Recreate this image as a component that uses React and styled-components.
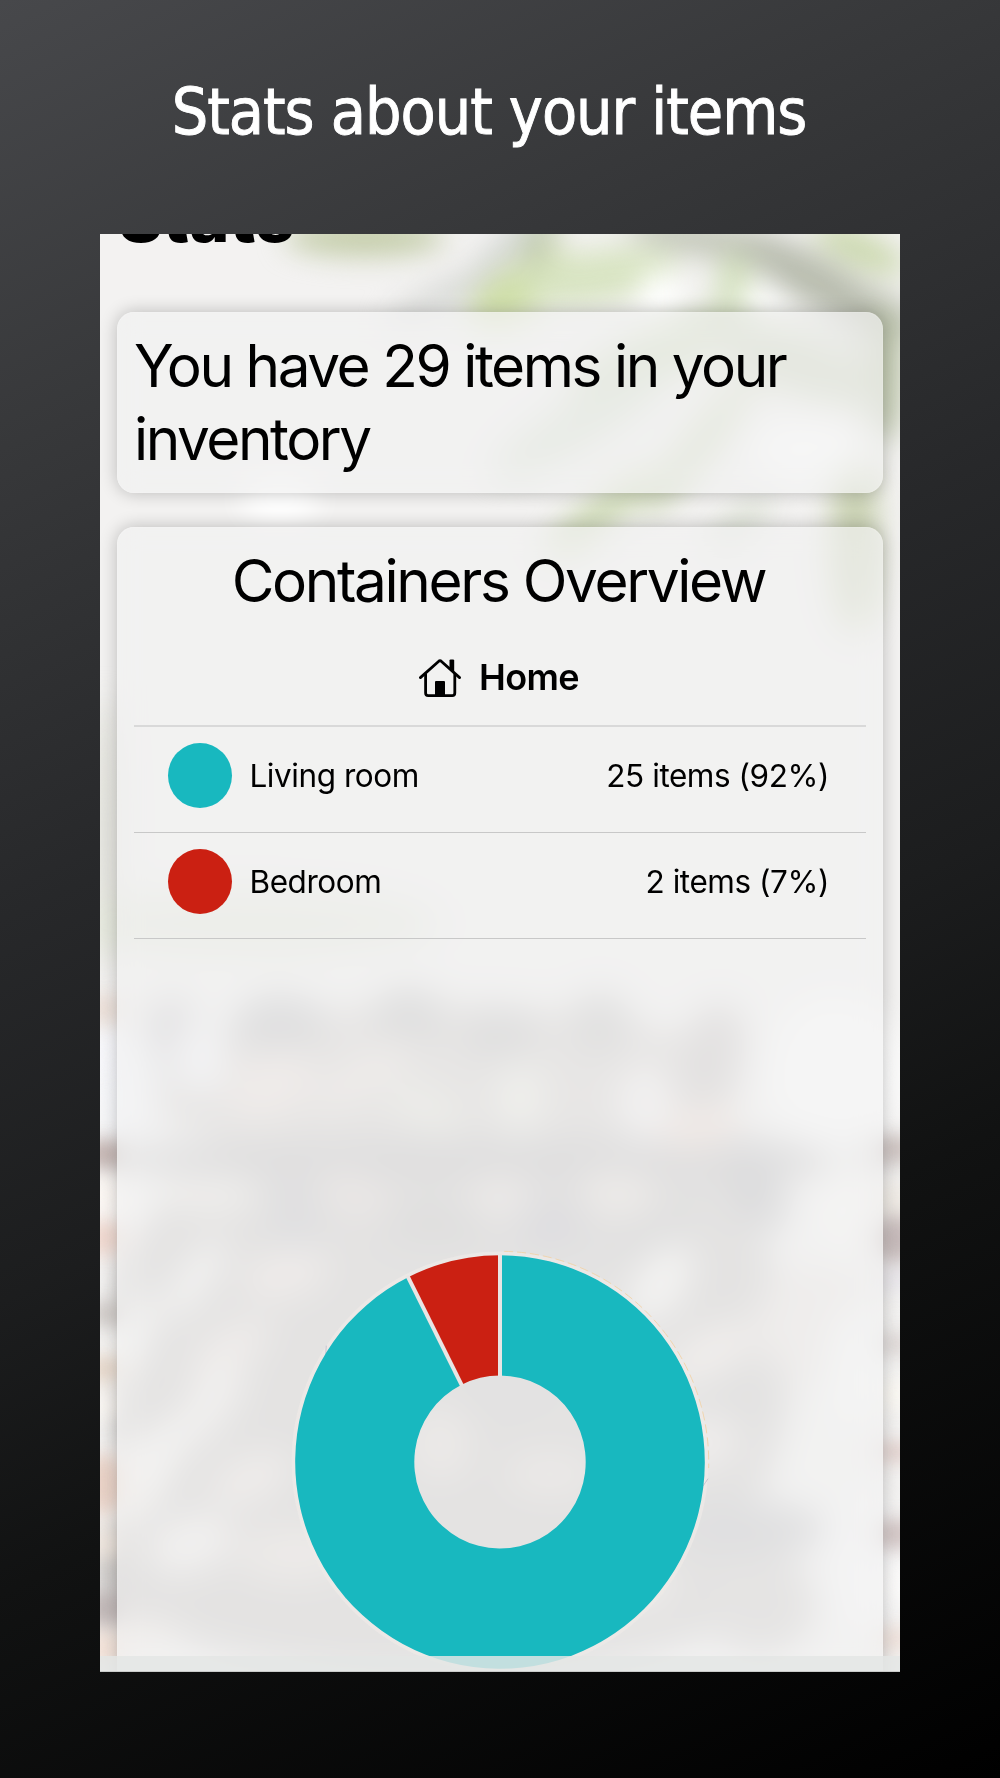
import React from 'react'
import styled, { createGlobalStyle } from 'styled-components'

const TEAL = '#18b8bf'
const RED = '#cb2012'

const containers = [
    {
        name: 'Living room',
        text: '25 items (92%)',
        count: 25,
        color: TEAL,
    },
    {
        name: 'Bedroom',
        text: '2 items (7%)',
        count: 2,
        color: RED,
    },
];

// cx, cy, rx, ry, rotation, fill - coordinates relative to the screen
const leaves = [
    [265, 4, 80, 18, 0, '#c3cca8'],
    [400, 20, 12, 80, 45, '#d2d6d2'],
    [340, 62, 12, 60, 62, '#d8dad7'],
    [425, 55, 62, 26, -28, '#cedea6'],
    [500, 42, 80, 26, -10, '#d8e4c2'],
    [440, 8, 14, 30, 30, '#c3cdb0'],
    [620, 8, 95, 18, 10, '#c3c7b9'],
    [635, 55, 18, 35, 0, '#d0dfb9'],
    [720, 50, 90, 24, 30, '#b8bcae'],
    [760, 15, 50, 16, 25, '#c9d7aa'],
    [770, 80, 50, 24, 20, '#b8bcae'],
    [785, 140, 18, 70, 0, '#b9c2a6'],
    [700, 130, 90, 30, 20, '#cbd3bb'],
    [560, 120, 100, 26, -25, '#ced9bb'],
    [480, 190, 100, 24, -30, '#d6dfcf'],
    [600, 210, 16, 90, 38, '#cdd7b8'],
    [500, 280, 70, 16, -38, '#ccd8b3'],
    [640, 290, 40, 14, -40, '#dce1d5'],
    [755, 300, 24, 100, 0, '#c9d1b2'],
    [180, 265, 40, 25, 0, '#ffffff'],
    [560, 64, 22, 28, 0, '#ffffff'],
    [665, 70, 28, 16, 20, '#ffffff'],
    [710, 215, 60, 30, 0, '#ffffff'],
    [5, 600, 14, 140, 0, '#deded6'],
    [150, 690, 190, 36, 0, '#e4e7dc'],
];

const basket = [
    [350, 1130, 340, 310, 0, '#c9c6c4'],
    [340, 1330, 350, 110, 0, '#c9c6c4'],
    [340, 850, 300, 80, 0, '#d4d0cd'],
    [400, 925, 400, 22, 0, '#bcbabb'],
    [180, 790, 45, 28, 0, '#bababc'],
    [66, 800, 25, 40, 20, '#c9c7ca'],
    [308, 785, 35, 30, 0, '#bababa'],
    [400, 800, 40, 26, 0, '#bdbcbc'],
    [500, 790, 30, 30, 0, '#c0bfbe'],
    [612, 820, 30, 50, 15, '#c6c1c0'],
    [100, 825, 26, 34, 0, '#f7f7fb'],
    [170, 850, 48, 32, -30, '#eae0db'],
    [265, 840, 60, 18, -35, '#e8e1dc'],
    [325, 875, 42, 20, 30, '#e4e4da'],
    [420, 865, 25, 40, 0, '#e9e9e1'],
    [545, 870, 28, 40, 0, '#f1eeee'],
    [600, 895, 40, 18, -10, '#f3ded3'],
    [25, 850, 34, 60, 0, '#f7f8fb'],
    [735, 840, 70, 80, 0, '#fcfcfc'],
    [110, 960, 50, 18, 0, '#eeebe6'],
    [20, 970, 32, 25, 0, '#fbfaf9'],
    [255, 960, 40, 18, 20, '#e0d6d2'],
    [400, 965, 35, 22, 0, '#e6dfda'],
    [520, 960, 40, 22, 10, '#e7e0da'],
    [195, 985, 24, 40, 0, '#bbbbc0'],
    [335, 990, 60, 22, 0, '#bcbbbb'],
    [450, 990, 40, 26, 0, '#b9b8be'],
    [550, 995, 50, 20, -30, '#bebdbd'],
    [655, 950, 28, 50, -20, '#b5b5b8'],
    [750, 970, 36, 48, 0, '#f8f7f5'],
    [95, 1045, 16, 50, 35, '#f6f5f3'],
    [30, 1110, 18, 55, 20, '#faf9f7'],
    [185, 1040, 45, 24, -15, '#eae1dd'],
    [130, 1115, 48, 20, -35, '#ece4e0'],
    [105, 1175, 55, 22, -50, '#f0edeb'],
    [45, 1240, 25, 60, 30, '#f7f5f2'],
    [150, 1245, 45, 22, -25, '#ebe4e0'],
    [90, 1310, 45, 28, -20, '#f1eeec'],
    [195, 1320, 60, 28, 0, '#e4ddd8'],
    [340, 1210, 30, 36, 0, '#e2dbd6'],
    [450, 1240, 45, 20, 0, '#e2dbd6'],
    [400, 1160, 50, 24, 0, '#c5c3c3'],
    [560, 1050, 24, 45, 35, '#f8f7f4'],
    [610, 1120, 50, 22, -30, '#f0e9e4'],
    [600, 1210, 40, 26, -15, '#ece6e3'],
    [640, 1160, 45, 26, 0, '#c6c4c3'],
    [715, 1090, 60, 60, 0, '#e9e4e1'],
    [755, 1130, 28, 60, 0, '#f8f9f9'],
    [715, 1220, 35, 35, 0, '#f3f3f1'],
    [650, 1295, 75, 26, 0, '#bcbcbf'],
    [500, 1350, 75, 24, 0, '#f0eae6'],
    [660, 1370, 55, 50, 0, '#cdcac8'],
    [765, 1330, 38, 70, 0, '#f8f8f9'],
    [30, 1400, 50, 16, 0, '#f1ebe6'],
];

// strips of the picture that stay visible beside the cards
const edges = [
    [4, 775, 16, '#e8d8cf'],
    [6, 820, 22, '#f7f7fb'],
    [4, 920, 14, '#b49e9a'],
    [4, 960, 18, '#fbf5f0'],
    [4, 1004, 18, '#edcdc1'],
    [6, 1080, 12, '#c2bbb7'],
    [4, 1135, 13, '#dfcab8'],
    [4, 1172, 15, '#fbf7f2'],
    [4, 1250, 30, '#e4c5b6'],
    [4, 1310, 16, '#f4e9df'],
    [4, 1375, 18, '#b1a5a5'],
    [4, 1415, 14, '#f3dbce'],
    [796, 915, 14, '#c0b2af'],
    [796, 965, 16, '#ece6de'],
    [796, 1005, 24, '#b4a4a4'],
    [796, 1045, 12, '#e2dfe6'],
    [796, 1110, 12, '#d5cdcb'],
    [796, 1160, 16, '#fcf9f2'],
    [796, 1218, 10, '#d8bfba'],
    [796, 1300, 16, '#c4b2b1'],
    [796, 1350, 20, '#fcfbfa'],
    [796, 1405, 12, '#ecd9d0'],
];

const Backdrop = () => (
    <Photo viewBox="0 0 800 1438">
        <defs>
            <filter id="soft" x="-30%" y="-30%" width="160%" height="160%" colorInterpolationFilters="sRGB">
                <feGaussianBlur stdDeviation="14" />
            </filter>
            <filter id="softEdge" x="-60%" y="-30%" width="220%" height="160%" colorInterpolationFilters="sRGB">
                <feGaussianBlur stdDeviation="9" />
            </filter>
        </defs>
        <rect width="800" height="1438" fill="#f3f2f1" />
        <g filter="url(#soft)">
            {[...leaves, ...basket].map(([cx, cy, rx, ry, angle, fill], index) => (
                <ellipse
                    key={index}
                    cx={cx}
                    cy={cy}
                    rx={rx}
                    ry={ry}
                    fill={fill}
                    transform={`rotate(${angle} ${cx} ${cy})`}
                />
            ))}
        </g>
        <g filter="url(#softEdge)" opacity="0.72">
            {edges.map(([cx, cy, ry, fill]) => (
                <ellipse key={`${cx}-${cy}`} cx={cx} cy={cy} rx="24" ry={ry} fill={fill} />
            ))}
        </g>
    </Photo>
);

const HomeIcon = () => (
    <svg width="44" height="40" viewBox="0 0 44 40" fill="none" stroke="#000" strokeWidth="2.8">
        <path d="M2.4 19.6 L20.8 3.2 Q22 2.2 23.2 3.2 L41.6 19.6" strokeLinecap="round" />
        <path d="M7.6 15.5 V35 Q7.6 37.6 10.2 37.6 H34.2 Q36.8 37.6 36.8 35 V15.5" />
        <path d="M31.5 2.6 Q31.5 1.4 32.7 1.4 H35 Q36.2 1.4 36.2 2.6 V14.8 L31.5 10.6 Z" fill="#000" stroke="none" />
        <path d="M17 24 Q17 23 18 23 H26 Q27 23 27 24 V37 H17 Z" fill="#000" stroke="none" />
    </svg>
);

const point = (radius, angle) =>
    `${radius * Math.sin(angle)} ${-radius * Math.cos(angle)}`;

const slicePath = (start, end, outer, inner) => {
    const large = end - start > Math.PI ? 1 : 0;
    return [
        `M${point(outer, start)}`,
        `A${outer} ${outer} 0 ${large} 1 ${point(outer, end)}`,
        `L${point(inner, end)}`,
        `A${inner} ${inner} 0 ${large} 0 ${point(inner, start)}`,
        'Z',
    ].join(' ');
};

const Donut = () => {
    const total = containers.reduce((sum, item) => sum + item.count, 0);
    let angle = 0;
    const slices = containers.map((item) => {
        const start = angle;
        angle += (item.count / total) * Math.PI * 2;
        return { ...item, start, end: angle };
    });
    return (
        <Chart viewBox="-210 -210 420 420" preserveAspectRatio="none">
            <circle r="206.5" fill="none" stroke="#eeeae7" strokeWidth="4" opacity="0.75" />
            <path d={`M${point(208.7, 0.02)} A208.7 208.7 0 0 1 ${point(208.7, 1.6)}`} fill="none" stroke="#f1d3a8" strokeWidth="0.9" strokeDasharray="9 4" />
            <path d={`M${point(208.7, 1.65)} A208.7 208.7 0 0 1 ${point(208.7, 5.3)}`} fill="none" stroke="#bdb9ca" strokeWidth="0.8" strokeDasharray="9 6" />
            {slices.map((slice) => (
                <path key={slice.name} d={slicePath(slice.start, slice.end, 204.8, 85.7)} fill={slice.color} />
            ))}
            {slices.map((slice) => (
                <path
                    key={slice.name}
                    d={`M${point(85, slice.start)} L${point(206.5, slice.start)}`}
                    stroke="#e9e5e4"
                    strokeWidth="4"
                />
            ))}
        </Chart>
    );
};

export default function App() {
    return (
        <Page>
            <GlobalStyle />
            <Caption>Stats about your items</Caption>
            <Screen>
                <Backdrop />
                <Content>
                    <Title>Stats</Title>
                    <Card>
                        <Summary>You have 29 items in your inventory</Summary>
                    </Card>
                    <Card $open>
                        <Heading>Containers Overview</Heading>
                        <Place>
                            <HomeIcon />
                            <span>Home</span>
                        </Place>
                        <List>
                            {containers.map((item) => (
                                <Row key={item.name}>
                                    <Dot $color={item.color} />
                                    <Name>{item.name}</Name>
                                    <Amount>{item.text}</Amount>
                                </Row>
                            ))}
                        </List>
                        <Donut />
                    </Card>
                </Content>
                <BottomBar />
            </Screen>
        </Page>
    );
}

const GlobalStyle = createGlobalStyle`
    * {
        box-sizing: border-box;
        margin: 0;
        padding: 0;
    }
    body {
        background: #000;
    }
`;

const Page = styled.main`
    display: flex;
    flex-direction: column;
    align-items: center;
    width: 1000px;
    height: 1778px;
    overflow: hidden;
    font-family: Inter, "Liberation Sans", sans-serif;
    color: #000;
    background: linear-gradient(
        155deg,
        #47484b 0%,
        #37383a 20%,
        #27282a 41%,
        #1c1d1e 58%,
        #111212 71%,
        #000 100%
    );
`;

const Caption = styled.h1`
    height: 234px;
    padding: 74px 22px 0 0;
    font-family: "DejaVu Sans Condensed", "DejaVu Sans", sans-serif;
    font-stretch: condensed;
    font-size: 64px;
    font-weight: 400;
    line-height: 76px;
    letter-spacing: -1.05px;
    white-space: nowrap;
    color: #fff;
    -webkit-text-stroke: 0.9px #fff;
`;

const Screen = styled.section`
    position: relative;
    width: 800px;
    height: 1438px;
    overflow: hidden;
`;

const Photo = styled.svg`
    position: absolute;
    inset: 0;
    width: 800px;
    height: 1438px;
`;

const Content = styled.div`
    position: relative;
    display: flex;
    flex-direction: column;
    gap: 34px;
    padding: 0 17px;
`;

const Title = styled.h2`
    height: 101px;
    margin-top: -57px;
    padding-left: 1px;
    font-size: 68px;
    font-weight: 800;
    line-height: 80px;
    letter-spacing: 0.2px;
`;

const Card = styled.article`
    height: ${({ $open }) => ($open ? '1200px' : '181px')};
    flex-shrink: 0;
    padding: 17px;
    border-radius: 17px;
    background: rgba(241, 241, 241, 0.66);
    backdrop-filter: blur(12px);
    box-shadow: 0 0 17px rgba(0, 0, 0, 0.24), inset 0 0 0 1px rgba(255, 255, 255, 0.12);
`;

const Summary = styled.p`
    font-size: 58.5px;
    line-height: 73px;
    letter-spacing: -2.45px;
`;

const Heading = styled.h3`
    height: 73px;
    padding-right: 3px;
    font-size: 58.5px;
    font-weight: 400;
    line-height: 73px;
    letter-spacing: -2.35px;
    text-align: center;
    white-space: nowrap;
`;

const Place = styled.div`
    display: flex;
    align-items: center;
    justify-content: center;
    gap: 17px;
    height: 108px;
    padding: 11px 3px 0 0;
    font-size: 36px;
    font-weight: 600;
    letter-spacing: -0.6px;
    svg {
        margin-top: 3px;
    }
`;

const List = styled.ul`
    list-style: none;
    border-top: 2px solid #d9d9d9;
`;

const Row = styled.li`
    display: flex;
    align-items: center;
    height: 106px;
    padding: 0 37px 8px 34px;
    border-bottom: 1px solid #c8c8c8;
    font-size: 31.5px;
    letter-spacing: -0.45px;
    white-space: nowrap;
`;

const Dot = styled.span`
    width: 64px;
    height: 65px;
    border-radius: 50%;
    background: ${({ $color }) => $color};
`;

const Name = styled.span`
    margin-left: 17.5px;
`;

const Amount = styled.span`
    margin-left: auto;
`;

const Chart = styled.svg`
    display: block;
    width: 420px;
    height: 424px;
    margin: 311px auto 0;
`;

const BottomBar = styled.div`
    position: absolute;
    left: 0;
    right: 0;
    bottom: 0;
    height: 16px;
    background: rgba(228, 230, 229, 0.84);
    border-bottom: 1px solid #c9cbca;
`;
